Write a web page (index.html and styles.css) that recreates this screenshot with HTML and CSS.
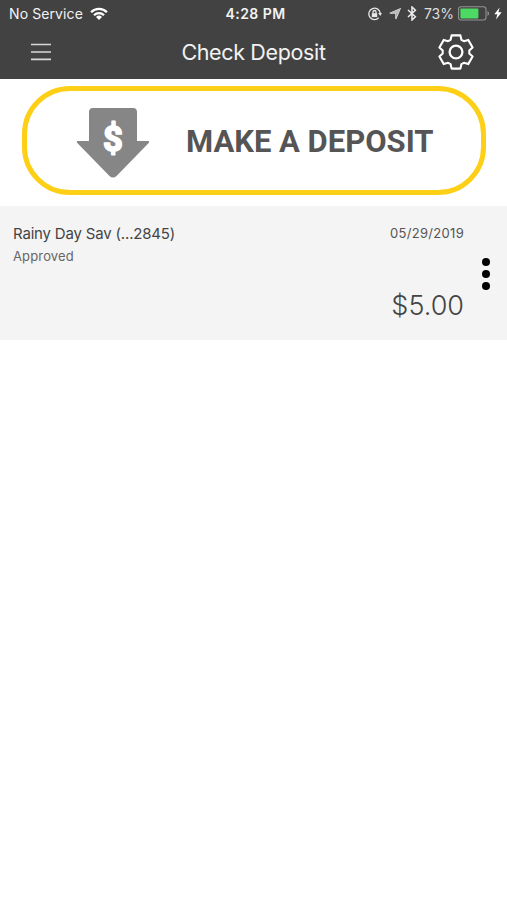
FILE: index.html
```html
<!DOCTYPE html>
<html lang="en">
<head>
<meta charset="utf-8">
<title>Check Deposit</title>
<link rel="stylesheet" href="styles.css">
</head>
<body>
<header class="top">
  <div class="status">
    <div class="status-left">
      <span class="carrier">No Service</span>
      <svg class="wifi" width="18" height="14" viewBox="0 0 18 14" fill="none" stroke="#fff" stroke-width="2.3"><path d="M1.1 5.2a11.2 11.2 0 0 1 15.8 0M4 8.2a7.1 7.1 0 0 1 10 0"/><path d="M9 13 6 10a4.3 4.3 0 0 1 6 0z" fill="#fff" stroke="none"/></svg>
    </div>
    <span class="clock">4:28 PM</span>
    <div class="status-right">
      <svg width="14" height="14" viewBox="0 0 14 14" fill="none" stroke="#e8e8e8" stroke-width="1.3"><path d="M10.7 10.8A5.7 5.7 0 1 1 12.2 6"/><path d="M10.2 6h3.8l-1.8 3z" fill="#e8e8e8" stroke="none"/><rect x="3.8" y="6.2" width="5.4" height="3.9" fill="#e8e8e8" stroke="none"/><path d="M5 6.5V5a1.5 1.5 0 0 1 3 0v1.5"/></svg>
      <svg class="location" width="12" height="12" viewBox="0 0 12 12"><path d="M11.2.8 6.8 11.1V5.3H.8z" fill="none" stroke="#ddd" stroke-width="1.1"/><path d="M11.2.8 7.2 10V5.3H.8z" fill="#bbb"/></svg>
      <svg class="bluetooth" width="10" height="15" viewBox="0 0 10 15" fill="none" stroke="#eee" stroke-width="1.5"><path d="m1 4 7.4 6.8L5 14V1l3.4 3.2L1 11"/></svg>
      <span class="percent">73%</span>
      <svg class="battery" width="32" height="15" viewBox="0 0 32 15"><rect x=".6" y=".8" width="27.4" height="13.2" rx="2.5" fill="none" stroke="#929292" stroke-width="1.1"/><rect x="2.4" y="2.6" width="18" height="9.8" rx=".8" fill="#4cd964"/><path d="M29.5 5v5c2-.7 2-4.3 0-5z" fill="#929292"/></svg>
      <svg class="bolt" width="8" height="13" viewBox="0 0 8 13"><path d="M5.6.4.3 7.3h3L2 12.6l5.7-7.3H4.5z" fill="#fff"/></svg>
    </div>
  </div>
  <nav class="nav">
    <svg class="menu" width="20" height="18" viewBox="0 0 20 18" fill="none" stroke="#d8d8d8" stroke-width="1.7"><path d="M0 1.5h20M0 9h20M0 16.3h20"/></svg>
    <h1 class="title">Check Deposit</h1>
    <svg class="gear" width="38" height="38" viewBox="-19 -19 38 38" fill="none" stroke="#fff" stroke-width="2.1" stroke-linejoin="round"><path d="M-4.4-16.6H4.4L5.4-12.2 7.9-10.8 12.2-12.1 16.6-4.5 13.3-1.5V1.5L16.6 4.5 12.2 12.1 7.9 10.8 5.4 12.2 4.4 16.6H-4.4L-5.4 12.2-7.9 10.8-12.2 12.1-16.6 4.5-13.3 1.5V-1.5L-16.6-4.5-12.2-12.1-7.9-10.8-5.4-12.2z"/><circle r="6.4" stroke-width="2.3"/></svg>
  </nav>
</header>
<main>
  <section class="action">
    <button class="deposit">
      <svg class="deposit-icon" width="74" height="72" viewBox="0 0 74 72"><path d="M17 1h40a4 4 0 0 1 4 4v29h11q2 .3.7 2L40.5 69q-3.5 3.2-7 0L1.3 36q-1.3-1.7.7-2h11V5a4 4 0 0 1 4-4z" fill="#868686"/><text class="dollar" x="37" y="44" text-anchor="middle">$</text></svg>
      <span class="deposit-label">MAKE A DEPOSIT</span>
    </button>
  </section>
  <article class="item">
    <div class="account">
      <div class="name">Rainy Day Sav (...2845)</div>
      <div class="state">Approved</div>
    </div>
    <div class="details">
      <time class="date">05/29/2019</time>
      <div class="amount">$5.00</div>
    </div>
    <div class="more"><i></i><i></i><i></i></div>
  </article>
</main>
</body>
</html>
```
FILE: styles.css
```css
* { box-sizing: border-box; }
body { margin: 0; background: #fff; font-family: Inter, "Liberation Sans", sans-serif; color: #444; }
svg { display: block; flex: none; }
.top { height: 79px; background: #424242; color: #f2f2f2; }
.status { height: 27px; display: grid; grid-template-columns: 1fr auto 1fr; align-items: center; padding: 0 5px 0 9px; font-size: 14px; line-height: 27px; white-space: nowrap; }
.status-left, .status-right { display: flex; align-items: center; }
.status-right { justify-content: flex-end; }
.carrier { letter-spacing: .1px; }
.wifi { margin-left: 7px; }
.clock { font-weight: 600; letter-spacing: .45px; }
.location { margin-left: 7px; }
.bluetooth { margin-left: 6px; }
.percent { margin-left: 7px; color: #ddd; }
.battery { margin-left: 4px; }
.bolt { margin-left: 4px; }
.nav { height: 52px; display: grid; grid-template-columns: 1fr auto 1fr; align-items: center; padding: 0 32px 2px; }
.menu { margin-left: -1px; }
.title { margin: 0; font-size: 21.5px; line-height: 30px; font-weight: 400; letter-spacing: -.35px; }
.gear { justify-self: end; }
.action { height: 127px; padding: 7px 21px 0 22px; }
.deposit { display: flex; align-items: center; width: 464px; height: 109px; padding: 0 0 0 49px; border: 5px solid #fdd017; border-radius: 48px; background: #fff; font-family: Roboto, "Liberation Sans", sans-serif; }
.deposit-icon { margin-top: 5px; }
.dollar { font-size: 34.5px; font-weight: 700; fill: #fff; stroke: #fff; stroke-width: 1.8px; stroke-linejoin: round; }
.deposit-label { margin: 2px 0 0 36px; color: #555; font-size: 31px; line-height: 36px; font-weight: 700; white-space: nowrap; }
.item { height: 134px; background: #f4f4f4; display: flex; padding: 18px 17px 0 13px; }
.account { flex: 1; }
.name { font-size: 15px; line-height: 20px; letter-spacing: -.18px; }
.state { margin-top: 3px; font-size: 13px; line-height: 18px; letter-spacing: .15px; color: #666; }
.details { display: flex; flex-direction: column; align-items: flex-end; }
.date { font-size: 13px; line-height: 18px; letter-spacing: .3px; color: #555; }
.amount { margin-top: 47px; font-size: 27px; line-height: 34px; font-weight: 300; }
.more { display: flex; flex-direction: column; gap: 4px; margin: 34px 0 0 18px; }
.more i { width: 8px; height: 8px; border-radius: 50%; background: #000; }
```
